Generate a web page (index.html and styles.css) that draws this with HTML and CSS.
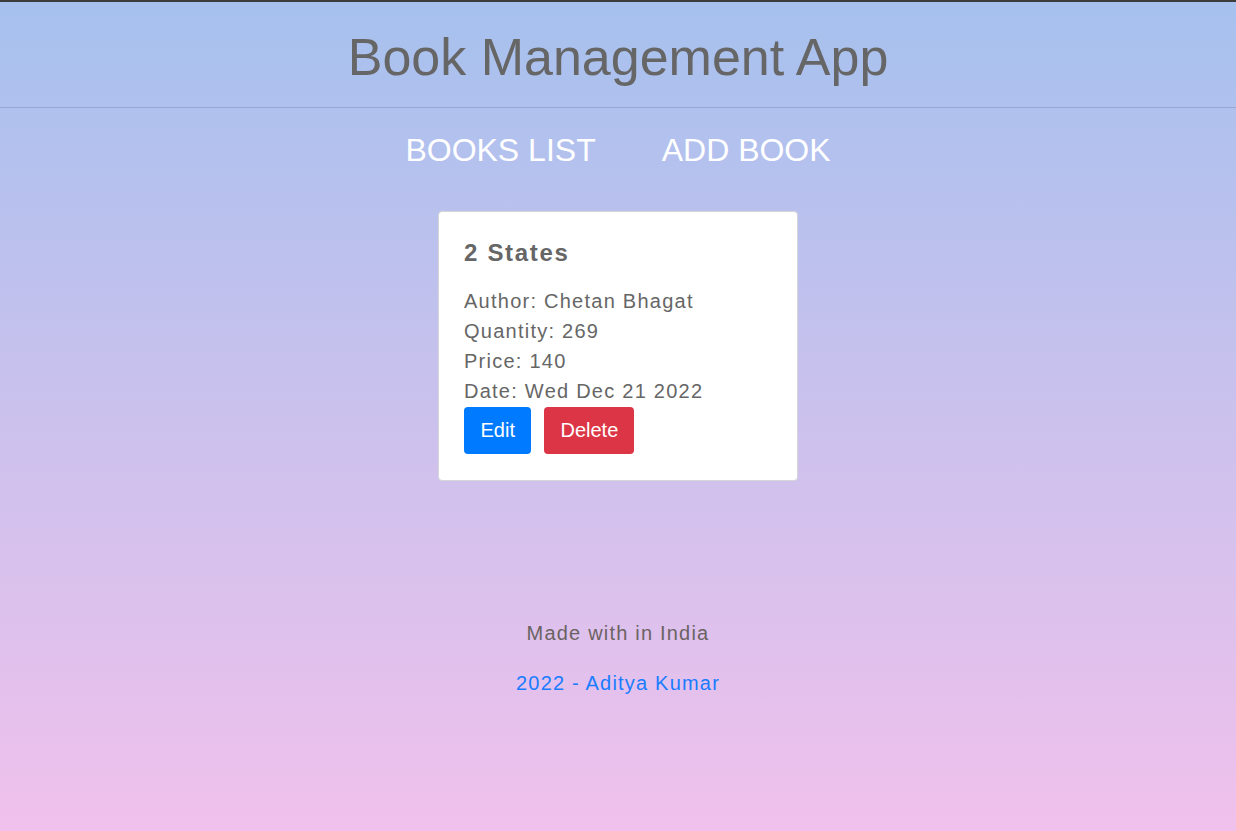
FILE: index.html
```html
<!DOCTYPE html>
<html>
<head>
<meta charset="utf-8">
<link rel="stylesheet" href="styles.css">
</head>
<body>
<div class="page">
  <header class="header">
    <h1 class="title">Book Management App</h1>
  </header>
  <nav class="nav">
    <a class="nav-link" href="#">BOOKS LIST</a>
    <a class="nav-link" href="#">ADD BOOK</a>
  </nav>
  <main class="main">
    <div class="card">
      <h2 class="card-title">2 States</h2>
      <div class="card-info">
        <div>Author: Chetan Bhagat</div>
        <div>Quantity: 269</div>
        <div>Price: 140</div>
        <div>Date: Wed Dec 21 2022</div>
      </div>
      <div class="actions">
        <button class="btn btn-edit">Edit</button>
        <button class="btn btn-delete">Delete</button>
      </div>
    </div>
  </main>
  <footer class="footer">
    <p class="made">Made with in India</p>
    <p class="credit">2022 - Aditya Kumar</p>
  </footer>
</div>
</body>
</html>
```
FILE: styles.css
```css
html, body {
  margin: 0;
  padding: 0;
  height: 100%;
}
body {
  font-family: "Liberation Sans", Arial, sans-serif;
  background: linear-gradient(to bottom, #a6c1ee 0%, #f0c1ec 100%);
  border-top: 2px solid #3c3c3c;
  box-sizing: border-box;
  min-height: 831px;
}
.page {
  display: flex;
  flex-direction: column;
}
.header {
  border-bottom: 1px solid #98a7d6;
  height: 105px;
  display: flex;
  align-items: center;
  justify-content: center;
}
.title {
  margin: 0;
  font-size: 52px;
  font-weight: normal;
  color: #666;
  position: relative;
  top: 2px;
}
.nav {
  display: flex;
  justify-content: center;
  gap: 66px;
  padding-top: 24px;
}
.nav-link {
  color: #fff;
  text-decoration: none;
  font-size: 32px;
}
.main {
  display: flex;
  justify-content: center;
  padding-top: 42px;
}
.card {
  width: 360px;
  background: #fff;
  border: 1px solid #d6d6d6;
  border-radius: 4px;
  padding: 27px 25px 25px 25px;
  box-sizing: border-box;
  height: 270px;
}
.card-title {
  margin: 0 0 19px 0;
  font-size: 24px;
  letter-spacing: 1.7px;
  color: #666;
}
.card-info {
  font-size: 20px;
  line-height: 30px;
  letter-spacing: 1.25px;
  color: #666;
}
.actions {
  display: flex;
  gap: 13px;
  margin-top: 1px;
}
.btn {
  border: none;
  border-radius: 4px;
  color: #fff;
  font-family: "Liberation Sans", Arial, sans-serif;
  font-size: 20px;
  height: 47px;
  padding: 0 16px;
}
.btn-edit { background: #007bff; padding: 0 16.5px; }
.btn-delete { background: #dc3545; }
.footer {
  text-align: center;
  padding-top: 141px;
  font-size: 20px;
  letter-spacing: 1.2px;
}
.made {
  margin: 0;
  color: #6b6363;
}
.credit {
  margin: 27px 0 0 0;
  color: #1a7cff;
}
```
